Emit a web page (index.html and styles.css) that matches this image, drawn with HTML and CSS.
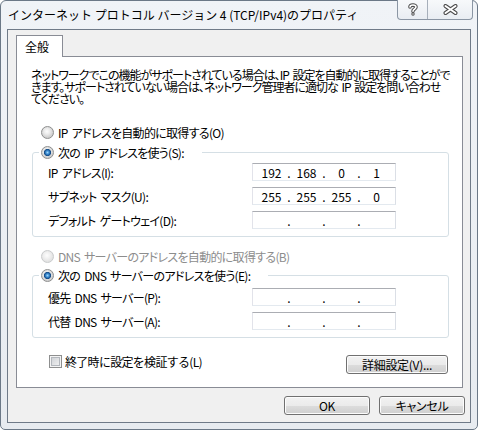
FILE: index.html
```html
<!DOCTYPE html>
<html lang="ja">
<head>
<meta charset="utf-8">
<title>TCP/IPv4 のプロパティ</title>
<link rel="stylesheet" href="styles.css">
</head>
<body>
<div class="window">
  <div class="titlebar">
    <div class="title">インターネット プロトコル バージョン 4 (TCP/IPv4)のプロパティ</div>
    <div class="caption">
      <div class="cbtn help">
        <svg width="10" height="13" viewBox="0 0 10 13"><path d="M2 4 C2 1.5 8 1.2 8 4 C8 6 5 6 5 8.2" fill="none" stroke="#4d4d4d" stroke-width="3.6" stroke-linecap="round"/><path d="M2 4 C2 1.5 8 1.2 8 4 C8 6 5 6 5 8.2" fill="none" stroke="#fff" stroke-width="1.6" stroke-linecap="round"/><circle cx="5" cy="11" r="1.7" fill="#4d4d4d"/><circle cx="5" cy="11" r="0.7" fill="#fff"/></svg>
      </div>
      <div class="cbtn close">
        <svg width="15" height="11" viewBox="0 0 15 11"><path d="M2.5 2 L12.5 9 M12.5 2 L2.5 9" stroke="#4d4d4d" stroke-width="4" stroke-linecap="round"/><path d="M2.5 2 L12.5 9 M12.5 2 L2.5 9" stroke="#fff" stroke-width="2" stroke-linecap="round"/></svg>
      </div>
    </div>
  </div>
  <div class="client">
    <div class="tabs"><div class="tab">全般</div></div>
    <div class="panel">
      <p class="desc">ネットワークでこの機能がサポートされている場合は、IP 設定を自動的に取得することがで<br>きます。サポートされていない場合は、ネットワーク管理者に適切な IP 設定を問い合わせ<br>てください。</p>
      <div class="opt first"><span class="radio"></span><span>IP アドレスを自動的に取得する(O)</span></div>
      <fieldset class="group g1">
        <legend><span class="opt"><span class="radio on"></span><span>次の IP アドレスを使う(S):</span></span></legend>
        <div class="field"><span class="flabel">IP アドレス(I):</span><div class="ip"><span>192</span><i>.</i><span>168</span><i>.</i><span>0</span><i>.</i><span>1</span></div></div>
        <div class="field"><span class="flabel">サブネット マスク(U):</span><div class="ip"><span>255</span><i>.</i><span>255</span><i>.</i><span>255</span><i>.</i><span>0</span></div></div>
        <div class="field"><span class="flabel">デフォルト ゲートウェイ(D):</span><div class="ip"><span></span><i>.</i><span></span><i>.</i><span></span><i>.</i><span></span></div></div>
      </fieldset>
      <div class="opt dns-auto disabled"><span class="radio off"></span><span>DNS サーバーのアドレスを自動的に取得する(B)</span></div>
      <fieldset class="group g2">
        <legend><span class="opt"><span class="radio on"></span><span>次の DNS サーバーのアドレスを使う(E):</span></span></legend>
        <div class="field"><span class="flabel">優先 DNS サーバー(P):</span><div class="ip"><span></span><i>.</i><span></span><i>.</i><span></span><i>.</i><span></span></div></div>
        <div class="field"><span class="flabel">代替 DNS サーバー(A):</span><div class="ip"><span></span><i>.</i><span></span><i>.</i><span></span><i>.</i><span></span></div></div>
      </fieldset>
      <div class="bottom-row">
        <div class="check"><span class="box"></span><span>終了時に設定を検証する(L)</span></div>
        <button class="btn adv">詳細設定(V)...</button>
      </div>
    </div>
    <div class="dlg-btns">
      <button class="btn ok">OK</button>
      <button class="btn cancel">キャンセル</button>
    </div>
  </div>
</div>
</body>
</html>
```
FILE: styles.css
```css
html, body {
  margin: 0;
  background: #ffffff;
}
body {
  font-family: "Noto Sans CJK JP", "Noto Sans", sans-serif;
  font-size: 12px;
  color: #000;
}
.window {
  width: 478px;
  height: 430px;
  box-sizing: border-box;
  border: 1px solid #6b7887;
  border-radius: 6px 6px 5px 5px;
  background: linear-gradient(#f0f3f7, #e7ebf0);
  padding: 0 6px 6px 6px;
  display: flex;
  flex-direction: column;
}
.titlebar {
  height: 28px;
  display: flex;
  justify-content: space-between;
  align-items: flex-start;
  flex: none;
}
.title {
  padding-left: 1px;
  line-height: 28px;
  white-space: nowrap;
  font-size: 12px;
}
.caption {
  display: flex;
  margin-top: -1px;
  margin-right: -2px;
  height: 19px;
  border: 1px solid #8b96a4;
  border-top: none;
  border-radius: 0 0 4px 4px;
  background: linear-gradient(#f7f9fb, #e9edf2);
  overflow: hidden;
}
.cbtn {
  display: flex;
  align-items: center;
  justify-content: center;
  height: 100%;
}
.help {
  width: 29px;
  border-right: 1px solid #a6afba;
}
.close {
  width: 44px;
}
.client {
  flex: 1;
  border: 1px solid #6f7a88;
  background: #f0f0f0;
  padding: 5px 7px 0 8px;
  display: flex;
  flex-direction: column;
  letter-spacing: -0.7px;
  word-spacing: 2px;
}
.tabs {
  display: flex;
  margin-bottom: -1px;
}
.tab {
  position: relative;
  z-index: 1;
  height: 22px;
  box-sizing: border-box;
  border: 1px solid #898c95;
  border-bottom: none;
  background: #fff;
  padding: 0 13px 0 8px;
  line-height: 21px;
  letter-spacing: 0;
}
.panel {
  height: 332px;
  box-sizing: border-box;
  border: 1px solid #898c95;
  background: #fff;
  display: flex;
  flex-direction: column;
}
.desc {
  margin: 12px 0 0 14px;
  line-height: 12px;
  white-space: nowrap;
  font-feature-settings: "palt";
  letter-spacing: -1px;
}
.opt {
  display: flex;
  align-items: center;
  gap: 4px;
  height: 13px;
  line-height: 13px;
  white-space: nowrap;
  font-feature-settings: "palt";
}
.opt.first {
  margin: 21px 0 0 24px;
}
.opt.dns-auto {
  margin: 13px 0 0 24px;
}
.disabled {
  color: #8d8d8d;
}
.radio {
  width: 13px;
  height: 13px;
  box-sizing: border-box;
  border-radius: 50%;
  border: 1px solid #8e8f8f;
  background: radial-gradient(circle at 45% 40%, #fdfdfd 0, #eaeaea 3px, #cfcfcf 6px);
  flex: none;
}
.radio.on {
  background:
    radial-gradient(circle at 50% 50%, #9fd6f7 0, #3f90d6 1.6px, #17528f 3px, #1d4f86 3.4px, transparent 3.8px),
    radial-gradient(circle at 45% 40%, #fdfdfd 0, #eaeaea 3px, #cfcfcf 6px);
}
.radio.off {
  border-color: #c9cbcc;
  background: radial-gradient(circle at 45% 40%, #fdfdfd 0, #f1f1f1 3px, #e3e3e3 6px);
}
.group {
  border: 1px solid #d5dfe5;
  border-radius: 3px;
  margin: 7px 13px 0 15px;
  padding: 0 0 7px 0;
  min-width: 0;
}
.group legend {
  margin-left: 6px;
  padding: 0 18px 0 2px;
}
.g2 {
  margin-top: 6px;
}
.field {
  display: grid;
  grid-template-columns: 204px 144px;
  align-items: center;
  height: 18px;
  margin-top: 6px;
  padding-left: 15px;
  white-space: nowrap;
  font-feature-settings: "palt";
}
.g1 .field:first-of-type {
  margin-top: 4px;
}
.g2 .field:first-of-type {
  margin-top: 6px;
}
.ip {
  width: 144px;
  height: 18px;
  box-sizing: border-box;
  border: 1px solid;
  border-color: #abadb3 #dbdfe6 #e3e9ef #e2e3ea;
  background: #fff;
  display: flex;
  align-items: center;
  padding-left: 4px;
  letter-spacing: 0;
  word-spacing: 0;
}
.ip span {
  width: 29px;
  text-align: center;
}
.ip i {
  width: 6px;
  text-align: center;
  font-style: normal;
}
.bottom-row {
  display: flex;
  justify-content: space-between;
  align-items: flex-start;
  margin: 17px 14px 0 32px;
}
.check {
  display: flex;
  align-items: center;
  gap: 3px;
  height: 13px;
  line-height: 13px;
  white-space: nowrap;
}
.box {
  width: 13px;
  height: 13px;
  box-sizing: border-box;
  border: 1px solid #8e8f8f;
  background: linear-gradient(135deg, #c9ccd1, #f6f6f6);
  box-shadow: inset 0 0 0 1px #f4f4f4, inset 0 0 0 2px #b3b7bd;
  flex: none;
}
.btn {
  font: inherit;
  color: #000;
  height: 19px;
  box-sizing: border-box;
  border: 1px solid #707070;
  border-radius: 3px;
  background: linear-gradient(#f2f2f2 0, #ebebeb 50%, #dddddd 50%, #cfcfcf 100%);
  box-shadow: inset 0 0 0 1px #fcfcfc;
  padding: 0;
  line-height: 17px;
  letter-spacing: -0.3px;
  font-feature-settings: "palt";
}
.adv {
  width: 102px;
}
.dlg-btns {
  display: flex;
  justify-content: flex-end;
  gap: 9px;
  margin: 8px -2px 0 0;
}
.ok, .cancel {
  width: 86px;
}
```
